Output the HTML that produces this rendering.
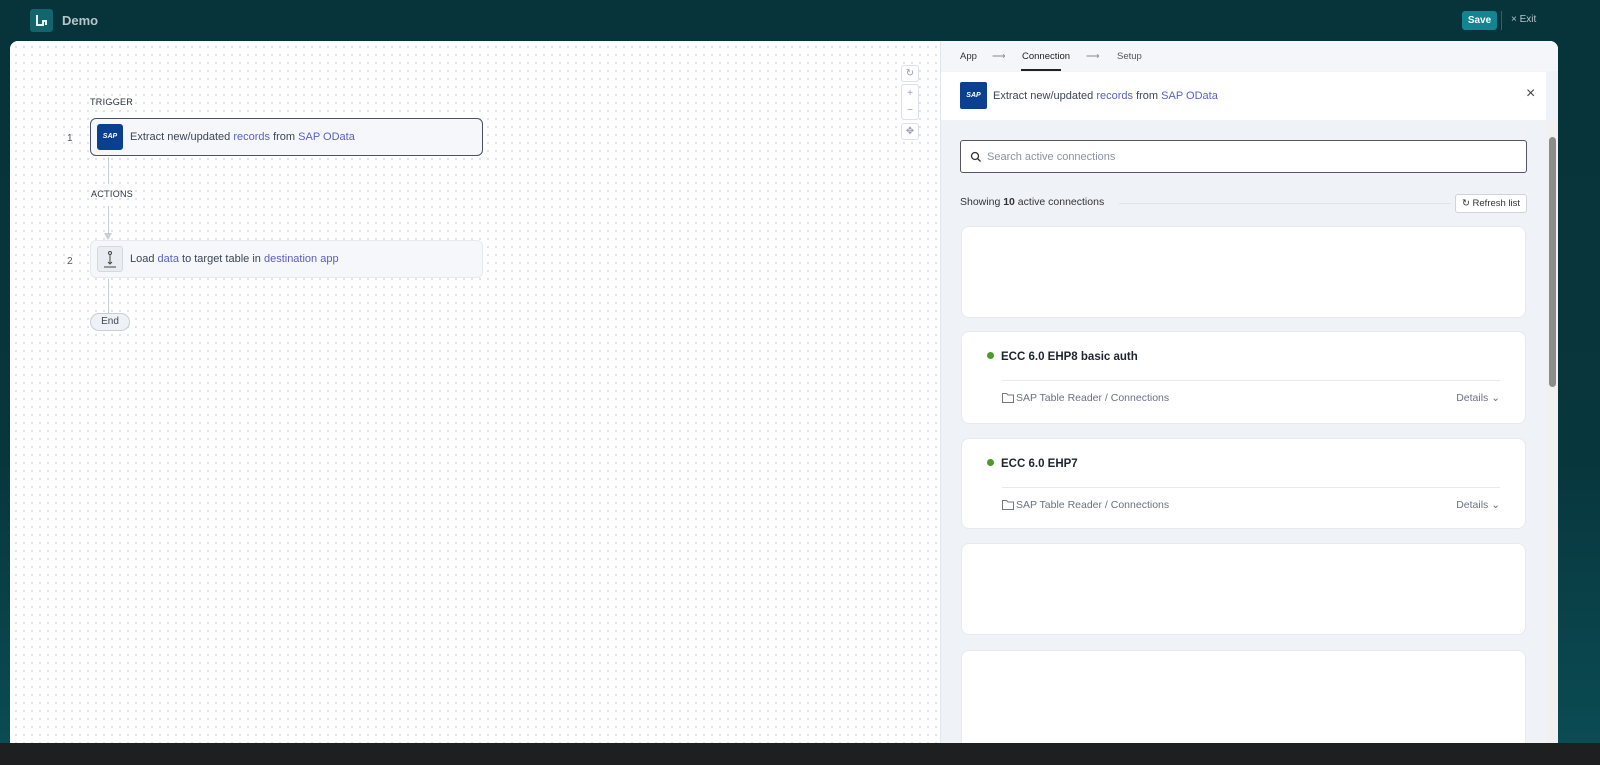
<!DOCTYPE html>
<html><head><style>
*{box-sizing:border-box;margin:0;padding:0}
body{width:1600px;height:765px;overflow:hidden;font-family:"Liberation Sans",sans-serif;background:linear-gradient(180deg,#07333a 0%,#08363d 60%,#0b4d55 100%);position:relative;color:#1d2939}
.top{position:absolute;left:0;top:0;width:1600px;height:41px}
.logo{position:absolute;left:30px;top:9px;width:23px;height:23px;background:#12646d;border-radius:3px}
.demo{position:absolute;left:62px;top:13px;color:#b7c6c9;font-weight:bold;font-size:13px}
.save{position:absolute;left:1462px;top:11px;width:35px;height:19px;background:#138490;border-radius:3px;color:#fff;font-size:10px;font-weight:bold;text-align:center;line-height:19px}
.sep{position:absolute;left:1501px;top:11px;width:1px;height:19px;background:#3b5f64}
.exit{position:absolute;left:1511px;top:14px;color:#b7c6c9;font-size:10px}
.main{position:absolute;left:10px;top:41px;width:1548px;height:702px;background:#fff;border-radius:8px 8px 0 0;overflow:hidden}
.canvas{position:absolute;left:0;top:0;width:930px;height:702px;background-color:#fff;background-image:radial-gradient(circle,#d4d8dd 0.8px,transparent 1px);background-size:8px 8px;background-position:2px 2px}
.lbl{position:absolute;font-size:9px;color:#2b3440;letter-spacing:.3px}
.num{position:absolute;font-size:10px;color:#556}
.step{position:absolute;left:80px;width:393px;height:38px;border-radius:6px;background:#f5f7fa;font-size:11px;color:#3c4555}
.step .ic{position:absolute;left:6px;top:5px;width:26px;height:26px;border-radius:3px}
.step .t{position:absolute;left:39px;top:12px}
.b{color:#5a5fc4}
.vline{position:absolute;left:98px;width:1px;background:#c9ced6}
.end{position:absolute;left:80px;top:272px;width:40px;height:18px;border:1px solid #c9ced6;border-radius:9px;background:#eef1f5;font-size:10px;text-align:center;line-height:16px;color:#445}
.ctl{position:absolute;left:891px;width:18px;background:#fff;border:1px solid #dde1e6;border-radius:3px;color:#99a;font-size:10px;text-align:center}
.panel{position:absolute;left:930px;top:0;width:618px;height:702px;background:#eff2f6;border-left:1px solid #e3e7ec}
.tabs{position:absolute;left:0;top:0;width:618px;height:30px;background:#f4f6f9;font-size:9.5px;color:#555}
.tabs span{position:absolute;top:10px}
.hdr{position:absolute;left:0;top:31px;width:605px;height:48px;background:#fff;font-size:11px;color:#3c4555}
.search{position:absolute;left:19px;top:99px;width:567px;height:33px;background:#fff;border:1px solid #556;border-radius:3px;font-size:11px;color:#8a93a0}
.card{position:absolute;left:20px;width:565px;background:#fff;border-radius:8px;border:1px solid #e6e9ee}
.card .n{position:absolute;left:25px;top:19px;font-size:11.5px;font-weight:bold;color:#1d2430}
.card .n:before{content:"";display:inline-block;width:7px;height:7px;border-radius:50%;background:#4c9a2a;margin-right:7px;vertical-align:1px}
.card .hr{position:absolute;left:40px;right:25px;top:48px;height:1px;background:#e6e9ee}
.card .f{position:absolute;left:40px;top:60px;font-size:10.5px;color:#6a7280}
.card .f svg{vertical-align:-2px;margin-right:2px}
.card .d{position:absolute;right:25px;top:60px;font-size:10.5px;color:#6a7280}
.sb{position:absolute;left:605px;top:80px;width:13px;height:622px;background:#f1f1f1}
.bottom{position:absolute;left:0;top:743px;width:1600px;height:22px;background:#1d1f21}
</style></head><body>
<div class="top">
<div class="logo"><svg width="23" height="23" viewBox="0 0 23 23"><path d="M7 6v10h6v-4h3v4" stroke="#e8f0f0" stroke-width="2" fill="none"/></svg></div>
<div class="demo">Demo</div>
<div class="save">Save</div><div class="sep"></div><div class="exit">× Exit</div>
</div>
<div class="main">
<div class="canvas">
<div class="lbl" style="left:80px;top:56px">TRIGGER</div>
<div class="num" style="left:57px;top:92px">1</div>
<div class="step" style="top:77px;border:1px solid #4a5260"><div class="ic" style="background:#0b3f8f;color:#fff;font-size:7px;font-weight:bold;line-height:26px;text-align:center;font-style:italic">SAP</div><div class="t">Extract new/updated <span class="b">records</span> from <span class="b">SAP OData</span></div></div>
<div class="vline" style="top:116px;height:27px"></div>
<div class="lbl" style="left:81px;top:148px">ACTIONS</div>
<div class="vline" style="top:165px;height:30px"></div>
<div style="position:absolute;left:94px;top:192px;border-left:4px solid transparent;border-right:4px solid transparent;border-top:7px solid #c9ced6"></div>
<div class="num" style="left:57px;top:215px">2</div>
<div class="step" style="top:199px;border:1px solid #e6e9ee"><div class="ic" style="background:#e9ecf0;border:1px solid #d5d9df"><svg width="24" height="24"><circle cx="12" cy="6" r="1.5" stroke="#444" fill="none"/><path d="M12 8v9M10 15l2 2 2-2M6 20h12" stroke="#444" fill="none"/></svg></div><div class="t">Load <span class="b">data</span> to target table in <span class="b">destination app</span></div></div>
<div class="vline" style="top:238px;height:34px"></div>
<div class="end">End</div>
<div class="ctl" style="top:24px;height:17px;line-height:16px">↻</div>
<div class="ctl" style="top:43px;height:36px;line-height:17px">+<br>−</div>
<div class="ctl" style="top:82px;height:17px;line-height:16px">✥</div>
</div>
<div class="panel">
<div class="tabs"><span style="left:19px;color:#333">App</span><span style="left:51px;color:#888">⟶</span><span style="left:81px;color:#222">Connection</span><div style="position:absolute;left:80px;top:28px;width:40px;height:2px;background:#222"></div><span style="left:145px;color:#888">⟶</span><span style="left:176px">Setup</span></div>
<div class="hdr"><div style="position:absolute;left:19px;top:10px;width:27px;height:27px;background:#0b3f8f;border-radius:2px;color:#fff;font-size:7px;font-weight:bold;font-style:italic;text-align:center;line-height:27px">SAP</div><div style="position:absolute;left:52px;top:18px">Extract new/updated <span class="b">records</span> from <span class="b">SAP OData</span></div><div style="position:absolute;left:585px;top:13px;font-size:16px;color:#444">×</div></div>
<div class="search"><svg style="position:absolute;left:9px;top:10px" width="12" height="12" viewBox="0 0 12 12"><circle cx="5" cy="5" r="3.5" stroke="#333" stroke-width="1.3" fill="none"/><path d="M7.5 7.5l3 3" stroke="#333" stroke-width="1.3"/></svg><span style="position:absolute;left:26px;top:10px">Search active connections</span></div>
<div style="position:absolute;left:19px;top:155px;font-size:10.5px;color:#333">Showing <b>10</b> active connections</div>
<div style="position:absolute;left:178px;top:162px;width:332px;height:1px;background:#e0e4ea"></div>
<div style="position:absolute;left:514px;top:153px;width:72px;height:19px;background:#fff;border:1px solid #cfd4db;border-radius:3px;font-size:9.5px;text-align:center;line-height:17px;color:#333">↻ Refresh list</div>
<div class="card" style="top:185px;height:92px"></div>
<div class="card" style="top:290px;height:93px"><div class="n">ECC 6.0 EHP8 basic auth</div><div class="hr"></div><div class="f"><svg width="12" height="10"><path d="M.5 .5h4l1.5 1.5h5.5v7.5h-11z" stroke="#777" fill="none"/></svg>SAP Table Reader / Connections</div><div class="d">Details ⌄</div></div>
<div class="card" style="top:397px;height:91px"><div class="n">ECC 6.0 EHP7</div><div class="hr"></div><div class="f"><svg width="12" height="10"><path d="M.5 .5h4l1.5 1.5h5.5v7.5h-11z" stroke="#777" fill="none"/></svg>SAP Table Reader / Connections</div><div class="d">Details ⌄</div></div>
<div class="card" style="top:502px;height:92px"></div>
<div class="card" style="top:609px;height:100px"></div>
<div class="sb"><div style="position:absolute;left:3px;top:16px;width:7px;height:250px;background:#8c8c8c;border-radius:4px"></div></div>
</div>
</div>
<div class="bottom"></div>
</body></html>
